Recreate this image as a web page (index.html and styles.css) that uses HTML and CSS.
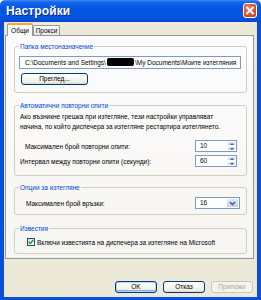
FILE: index.html
```html
<!DOCTYPE html>
<html lang="bg">
<head>
<meta charset="utf-8">
<title>Настройки</title>
<link rel="stylesheet" href="styles.css">
</head>
<body>
<div class="window">
  <div class="titlebar">
    <span class="title">Настройки</span>
    <span class="close"><svg width="12" height="13" viewBox="0 0 12 13"><path d="M3 3.5 L9 9.5 M9 3.5 L3 9.5" stroke="#fff" stroke-width="1.8" stroke-linecap="square"/></svg></span>
  </div>
  <div class="frame">
    <div class="client">
      <div class="tabs">
        <div class="tab active">Общи</div>
        <div class="tab">Прокси</div>
      </div>
      <div class="panel">
        <fieldset class="group g-dest">
          <legend>Папка местоназначение</legend>
          <div class="textbox">C:\Documents and Settings\<span class="redact"></span>\My Documents\Моите изтегляния</div>
          <div class="btn browse">Преглед...</div>
        </fieldset>
        <fieldset class="group g-retry">
          <legend>Автоматични повторни опити</legend>
          <p class="desc">Ако възникне грешка при изтегляне, тези настройки управляват<br>начина, по който диспечера за изтегляне рестартира изтеглянето.</p>
          <div class="row r-max">
            <span class="label l-max">Максимален брой повторни опити:</span>
            <div class="spin"><span class="val">10</span><span class="spinbtns"><span class="sb up"></span><span class="sb down"></span></span></div>
          </div>
          <div class="row r-int">
            <span class="label">Интервал между повторни опити (секунди):</span>
            <div class="spin"><span class="val">60</span><span class="spinbtns"><span class="sb up"></span><span class="sb down"></span></span></div>
          </div>
        </fieldset>
        <fieldset class="group g-opts">
          <legend>Опции за изтегляне</legend>
          <div class="row r-conn">
            <span class="label l-conn">Максимален брой връзки:</span>
            <div class="combo"><span class="val">16</span><span class="drop"><svg width="7" height="5" viewBox="0 0 7 5"><path d="M0.8 1 L3.5 3.6 L6.2 1" fill="none" stroke="#4D6185" stroke-width="1.5"/></svg></span></div>
          </div>
        </fieldset>
        <fieldset class="group g-notif">
          <legend>Известия</legend>
          <div class="row r-check">
            <span class="check"><svg width="6" height="6" viewBox="0 0 6 6"><path d="M0.6 2.8 L2.3 4.5 L5.4 1" fill="none" stroke="#21A121" stroke-width="1.4"/></svg></span>
            <span class="label">Включи известията на диспечера за изтегляне на Microsoft</span>
          </div>
        </fieldset>
      </div>
      <div class="actions">
        <div class="btn default">OK</div>
        <div class="btn">Отказ</div>
        <div class="btn disabled">Приложи</div>
      </div>
    </div>
  </div>
</div>
</body>
</html>
```
FILE: styles.css
```css
html, body {
  margin: 0;
  padding: 0;
}
body {
  width: 261px;
  height: 300px;
  overflow: hidden;
  font-family: "Liberation Sans", Arial, sans-serif;
  font-size: 6.5px;
  color: #000;
  background: #fff;
}
.window {
  width: 261px;
  height: 300px;
  display: flex;
  flex-direction: column;
}
.titlebar {
  height: 22px;
  flex: none;
  display: flex;
  justify-content: space-between;
  align-items: flex-start;
  padding: 0 4px 0 6px;
  background: linear-gradient(180deg, #3F8CF5 0%, #1566EE 10%, #0558E4 35%, #0454E0 80%, #0347CE 100%);
  border-radius: 5px 5px 0 0;
  box-sizing: border-box;
}
.title {
  margin-top: 4px;
  color: #fff;
  font-weight: bold;
  font-size: 12px;
  line-height: 14px;
  text-shadow: 1px 1px 0 #0A2A9C;
  letter-spacing: 0.1px;
}
.close {
  margin-top: 3px;
  width: 14px;
  height: 15px;
  box-sizing: border-box;
  border: 1px solid #fff;
  border-radius: 3px;
  background: radial-gradient(circle at 40% 35%, #EC8A6C 0%, #DE5A3A 45%, #C2391B 100%);
  display: flex;
  align-items: center;
  justify-content: center;
}
.frame {
  flex: 1;
  padding: 0 4px 3px;
  background: linear-gradient(90deg, #0A4FD8 0%, #0554E2 50%, #0A4FD8 100%);
  display: flex;
}
.client {
  flex: 1;
  background: #ECE9D8;
  display: flex;
  flex-direction: column;
}
.tabs {
  height: 13px;
  flex: none;
  display: flex;
  align-items: flex-end;
  padding-left: 3px;
  position: relative;
  z-index: 1;
}
.tab {
  height: 9px;
  width: 25px;
  box-sizing: content-box;
  border: 1px solid #919B9C;
  border-bottom: none;
  border-radius: 2px 2px 0 0;
  background: linear-gradient(180deg, #FFFFFF 0%, #F3F3EF 60%, #E6E5DE 100%);
  text-align: center;
  line-height: 9px;
  margin-bottom: 0;
}
.tab.active {
  height: 11px;
  width: 24px;
  margin-bottom: -1px;
  border-top: 2px solid #F7A53B;
  line-height: 12px;
  background: #FBFBF9;
  margin-right: 0;
}
.panel {
  flex: none;
  margin: 0 3px 0 1px;
  border: 1px solid #919B9C;
  background: linear-gradient(180deg, #FCFCFE 0%, #F6F5F0 100%);
  padding: 6px 0 4px;
}
.group {
  margin: 0 6px 0 8px;
  padding: 5px 5px 7px;
  border: 1px solid #D0D0BF;
  border-radius: 3px;
  min-width: 0;
}
.group legend {
  color: #0046D5;
  line-height: 9px;
  padding: 0 1px;
  margin-left: -1px;
}
.g-retry, .g-opts, .g-notif { margin-top: 8px; }
.g-opts { margin-top: 7px; }
.g-notif { margin-top: 9px; }
.textbox {
  height: 13px;
  box-sizing: border-box;
  border: 1px solid #7F9DB9;
  background: #fff;
  padding-left: 5px;
  line-height: 11px;
  white-space: nowrap;
  overflow: hidden;
  margin-left: -1px;
}
.redact {
  display: inline-block;
  width: 27px;
  height: 8px;
  margin: 0 1px;
  background: #000;
  border-radius: 2px;
  vertical-align: -1px;
}
.btn {
  height: 12px;
  box-sizing: border-box;
  border: 1px solid #003C74;
  border-radius: 3px;
  background: linear-gradient(180deg, #FFFFFF 0%, #F6F6F2 50%, #ECEBE4 85%, #D6D0C5 100%);
  text-align: center;
  line-height: 10px;
}
.browse {
  width: 67px;
  margin-top: 4px;
  margin-left: 1px;
}
.g-retry { padding-top: 2px; padding-bottom: 8px; }
.desc {
  margin: 0;
  line-height: 10px;
}
.row {
  display: flex;
  align-items: center;
  justify-content: space-between;
}
.r-max { margin-top: 8px; margin-right: 4px; }
.r-int { margin-top: 3px; margin-right: 4px; }
.l-max { padding-left: 5px; }
.spin, .combo {
  height: 12px;
  box-sizing: border-box;
  border: 1px solid #7F9DB9;
  background: #fff;
  display: flex;
  align-items: stretch;
  justify-content: space-between;
}
.spin { width: 42px; }
.val {
  padding-left: 4px;
  line-height: 10px;
}
.spinbtns {
  width: 9px;
  display: flex;
  flex-direction: column;
}
.sb {
  flex: 1;
  background: linear-gradient(180deg, #DDE7FC 0%, #BFD0F6 100%);
  border: 1px solid #fff;
  border-radius: 1px;
  position: relative;
}
.sb::after {
  content: "";
  position: absolute;
  left: 1.5px;
  border-left: 2px solid transparent;
  border-right: 2px solid transparent;
}
.sb.up::after { top: 1px; border-bottom: 2px solid #4D6185; }
.sb.down::after { top: 1px; border-top: 2px solid #4D6185; }
.g-opts { padding-top: 5px; padding-bottom: 5px; }
.r-conn { margin-right: 1px; }
.l-conn { padding-left: 6px; }
.combo { width: 45px; }
.drop {
  width: 11px;
  background: linear-gradient(180deg, #E0E9FD 0%, #C1D2F7 100%);
  border: 1px solid #fff;
  border-radius: 1px;
  display: flex;
  align-items: center;
  justify-content: center;
}
.g-notif { padding-top: 4px; padding-bottom: 6px; }
.r-check {
  justify-content: flex-start;
  height: 10px;
  padding-left: 7px;
}
.check {
  width: 8px;
  height: 8px;
  box-sizing: border-box;
  border: 1px solid #1C5180;
  background: linear-gradient(135deg, #DCDCD7 0%, #FFFFFF 100%);
  display: flex;
  align-items: center;
  justify-content: center;
  margin-right: 2px;
}
.actions {
  margin-top: auto;
  padding: 0 4px 4px 0;
  display: flex;
  justify-content: flex-end;
  gap: 6px;
}
.actions .btn { width: 42px; }
.btn.default {
  box-shadow: inset 0 0 0 1px #BCD4F6, inset 0 -1px 0 1px #89ADE4;
}
.btn.disabled {
  border-color: #C9C7BA;
  color: #ACA899;
  background: #F5F4EA;
}
```
